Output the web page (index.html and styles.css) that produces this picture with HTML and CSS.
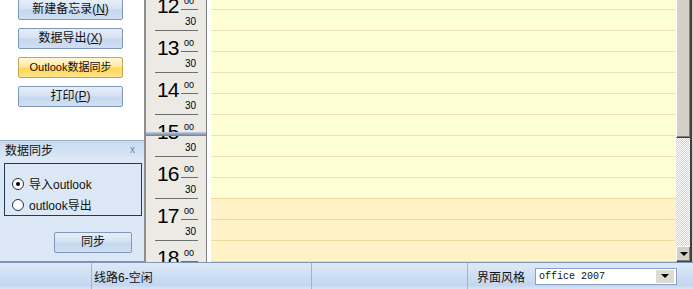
FILE: index.html
```html
<!DOCTYPE html>
<html lang="zh-CN">
<head>
<meta charset="utf-8">
<title>日历</title>
<link rel="stylesheet" href="styles.css">
</head>
<body>
<div class="app">
  <div class="main">
    <aside class="left">
      <div class="actions">
        <button class="btn">新建备忘录(<u>N</u>)</button>
        <button class="btn">数据导出(<u>X</u>)</button>
        <button class="btn btn-active">Outlook数据同步</button>
        <button class="btn">打印(<u>P</u>)</button>
      </div>
      <section class="sync">
        <div class="sync-head"><span>数据同步</span><span class="close">x</span></div>
        <div class="sync-body">
          <div class="group">
            <label class="radio"><span class="dot checked"></span>导入outlook</label>
            <label class="radio"><span class="dot"></span>outlook导出</label>
          </div>
          <button class="btn btn-sync">同步</button>
        </div>
      </section>
    </aside>
    <div class="times">
      <div class="hours">
        <div class="hour"><div class="hrow"><span class="hnum">12</span><span class="mins">00</span></div><div class="half">30</div></div>
        <div class="hour"><div class="hrow"><span class="hnum">13</span><span class="mins">00</span></div><div class="half">30</div></div>
        <div class="hour"><div class="hrow"><span class="hnum">14</span><span class="mins">00</span></div><div class="half">30</div></div>
        <div class="hour"><div class="hrow"><span class="hnum">15</span><span class="mins">00</span></div><div class="half">30</div></div>
        <div class="hour"><div class="hrow"><span class="hnum">16</span><span class="mins">00</span></div><div class="half">30</div></div>
        <div class="hour"><div class="hrow"><span class="hnum">17</span><span class="mins">00</span></div><div class="half">30</div></div>
        <div class="hour"><div class="hrow"><span class="hnum">18</span><span class="mins">00</span></div><div class="half">30</div></div>
      </div>
      <div class="now-bar"></div>
    </div>
    <div class="gap"></div>
    <div class="grid">
      <div class="slot"></div><div class="slot"></div><div class="slot"></div><div class="slot"></div>
      <div class="slot"></div><div class="slot"></div><div class="slot"></div><div class="slot"></div>
      <div class="slot"></div><div class="slot"></div>
      <div class="slot off"></div><div class="slot off"></div><div class="slot off"></div><div class="slot off"></div>
    </div>
    <div class="vscroll">
      <div class="thumb"></div>
      <div class="track"></div>
      <div class="arrow"><span class="tri"></span></div>
    </div>
    <div class="frame"></div>
  </div>
  <footer class="status">
    <div class="cell c1"></div>
    <div class="cell c2">线路6-空闲</div>
    <div class="cell c3"></div>
    <div class="cell c4">
      <span class="label">界面风格</span>
      <div class="combo"><span class="combo-text">office 2007</span><span class="combo-btn"><span class="tri"></span></span></div>
    </div>
  </footer>
</div>
</body>
</html>
```
FILE: styles.css
```css
* { box-sizing: border-box; }
html, body { margin: 0; padding: 0; }
body {
  width: 693px;
  height: 289px;
  overflow: hidden;
  font-family: "Liberation Sans", "Noto Sans CJK SC", sans-serif;
  font-size: 12px;
  color: #111;
  background: #fff;
}
.app { display: flex; flex-direction: column; height: 289px; }
.main { display: flex; height: 262px; overflow: hidden; }

/* left column */
.left {
  width: 146px;
  border-right: 2px solid #8d8d8d;
  display: flex;
  flex-direction: column;
}
.actions {
  height: 141px;
  background: #fff;
  display: flex;
  flex-direction: column;
  gap: 8px;
  padding-left: 18px;
  margin-top: -1px;
}
.btn {
  width: 105px;
  height: 21px;
  padding: 0;
  border: 1px solid #8197ba;
  border-radius: 2px;
  background: linear-gradient(#e6eef9, #d6e3f4 45%, #c6d8ef 55%, #cfdff3);
  font-family: "Liberation Sans", "Noto Sans CJK SC", sans-serif;
  font-size: 12px;
  color: #111;
  line-height: 19px;
  text-align: center;
}
.btn u { text-decoration: underline; }
.btn-active {
  border-color: #c4a455;
  background: linear-gradient(#fff7d8, #ffe9a0 45%, #ffd658 55%, #ffe38a);
  font-size: 11px;
}

.sync {
  flex: 1;
  display: flex;
  flex-direction: column;
  background: #dde8f6;
  border-top: 1px solid #9fb1c9;
}
.sync-head {
  height: 16px;
  display: flex;
  justify-content: space-between;
  align-items: center;
  padding: 0 9px 0 5px;
  background: linear-gradient(#c9dbf2, #d8e5f6);
  font-size: 12px;
  color: #111;
}
.close { color: #6a84ad; font-size: 10px; }
.sync-body {
  flex: 1;
  padding: 6px 2px 0 4px;
  border-bottom: 1px solid #8d8d8d;
}
.group {
  height: 53px;
  border: 1px solid #22395d;
  padding-top: 9px;
}
.radio {
  height: 21px;
  display: flex;
  align-items: center;
  padding-left: 7px;
  gap: 5px;
  font-size: 12px;
}
.dot {
  width: 12px;
  height: 12px;
  border: 1px solid #1f2f4a;
  border-radius: 50%;
  background: #fff;
  display: flex;
  align-items: center;
  justify-content: center;
}
.dot.checked::after {
  content: "";
  width: 4px;
  height: 4px;
  border-radius: 50%;
  background: #000;
}
.btn-sync {
  display: block;
  width: 78px;
  margin: 16px 0 0 50px;
}

/* time column */
.times {
  position: relative;
  width: 61px;
  background: #ebeae5;
  border-right: 1px solid #7f7f7f;
  overflow: hidden;
}
.hours { margin-top: -12px; }
.hour { height: 42px; padding: 0 8px 0 9px; }
.hrow {
  height: 22px;
  border-top: 1px solid #6e6e6e;
  display: flex;
  justify-content: space-between;
}
.hnum {
  padding: 6px 0 0 2px;
  font-size: 21px;
  line-height: 21px;
  letter-spacing: -1px;
  color: #000;
}
.mins {
  width: 17px;
  height: 21px;
  border-bottom: 1px solid #6e6e6e;
  padding: 8px 0 0 3px;
  font-size: 9px;
  line-height: 9px;
  color: #000;
}
.half {
  height: 20px;
  text-align: right;
  padding: 7px 2px 0 0;
  font-size: 10px;
  line-height: 10px;
  color: #000;
}
.now-bar {
  position: absolute;
  left: 0;
  right: 0;
  top: 132px;
  height: 4px;
  background: linear-gradient(#c7d0de, #8c9bb6 60%, #6f7f9e);
}

.gap { width: 4px; background: #fff; }

/* day grid */
.grid {
  flex: 1;
  background: #ffffd5;
  overflow: hidden;
}
.slot {
  height: 21px;
  border-top: 1px solid #eee3b3;
  background: #ffffd5;
}
.slot:first-child { margin-top: -12px; }
.slot.off { background: #fff2c6; border-top-color: #efdba0; }

/* scrollbar */
.vscroll {
  width: 14px;
  display: flex;
  flex-direction: column;
}
.thumb {
  height: 138px;
  background: #d4d0c8;
  border-left: 1px solid #fff;
  border-bottom: 1px solid #404040;
  box-shadow: inset -1px 0 #808080, inset 0 -1px #808080;
}
.track {
  flex: 1;
  background: repeating-conic-gradient(#d4d0c8 0 25%, #fff 0 50%) 0 0 / 2px 2px;
}
.arrow {
  height: 16px;
  background: #d4d0c8;
  border-top: 1px solid #fff;
  border-left: 1px solid #fff;
  border-bottom: 1px solid #404040;
  box-shadow: inset -1px -1px #808080;
  display: flex;
  align-items: center;
  justify-content: center;
}
.tri {
  width: 0;
  height: 0;
  border-left: 4px solid transparent;
  border-right: 4px solid transparent;
  border-top: 4px solid #000;
}
.frame {
  width: 3px;
  border-left: 2px solid #404040;
  background: #d4d0c8;
}

/* status bar */
.status {
  height: 27px;
  display: flex;
  border-top: 1px solid #7f97b8;
  background: linear-gradient(#dde9f8, #cddff4 50%, #c3d6ee 85%, #d9e6f6);
  font-size: 12px;
}
.cell {
  display: flex;
  align-items: center;
  border-right: 1px solid #9db3d2;
}
.c1 { width: 92px; }
.c2 { width: 220px; padding-left: 2px; }
.c3 { width: 156px; }
.c4 { flex: 1; border-right: 0; padding-left: 9px; }
.label { width: 58px; }
.combo {
  width: 142px;
  height: 17px;
  border: 1px solid #8aa1c2;
  background: #fff;
  display: flex;
  align-items: center;
  justify-content: space-between;
  padding: 0 2px 0 3px;
}
.combo-text {
  font-family: "Liberation Mono", monospace;
  font-size: 10px;
}
.combo-btn {
  width: 18px;
  height: 13px;
  background: #dedbd3;
  display: flex;
  align-items: center;
  justify-content: center;
}
```
